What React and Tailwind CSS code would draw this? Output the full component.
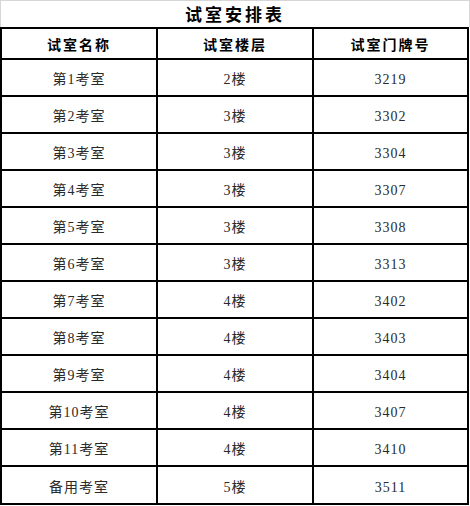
import React from "react";

const rows = [
  ["第1考室", "2楼", "3219"],
  ["第2考室", "3楼", "3302"],
  ["第3考室", "3楼", "3304"],
  ["第4考室", "3楼", "3307"],
  ["第5考室", "3楼", "3308"],
  ["第6考室", "3楼", "3313"],
  ["第7考室", "4楼", "3402"],
  ["第8考室", "4楼", "3403"],
  ["第9考室", "4楼", "3404"],
  ["第10考室", "4楼", "3407"],
  ["第11考室", "4楼", "3410"],
  ["备用考室", "5楼", "3511"],
];

const headers = ["试室名称", "试室楼层", "试室门牌号"];

export default function App() {
  return (
    <div className="w-[470px] h-[506px] bg-white font-['Liberation_Serif','Noto_Sans_CJK_SC',serif] text-black">
      {/* title */}
      <div className="h-[27px] border border-b-0 border-[#d6d6d6] flex items-center justify-center pt-[4px] text-[17px] font-bold tracking-[3px]">
        试室安排表
      </div>

      {/* table */}
      <div className="w-[469px] border-l-2 border-t-2 border-black grid grid-cols-[156px_156px_155px]">
        {headers.map((h) => (
          <div
            key={h}
            className="h-[31px] border-r-2 border-b-2 border-black flex items-center justify-center pt-[3px] text-[14px] font-bold tracking-[2px]"
          >
            {h}
          </div>
        ))}
        {rows.map((r, i) =>
          r.map((c, j) => (
            <div
              key={i + "-" + j}
              className={
                "border-r-2 border-b-2 border-black flex items-center justify-center pt-[4px] text-[14px] tracking-[1px] text-[#2a2a2a] " +
                (i === rows.length - 1 ? "h-[38px]" : "h-[37px]")
              }
            >
              {c}
            </div>
          ))
        )}
      </div>
    </div>
  );
}
